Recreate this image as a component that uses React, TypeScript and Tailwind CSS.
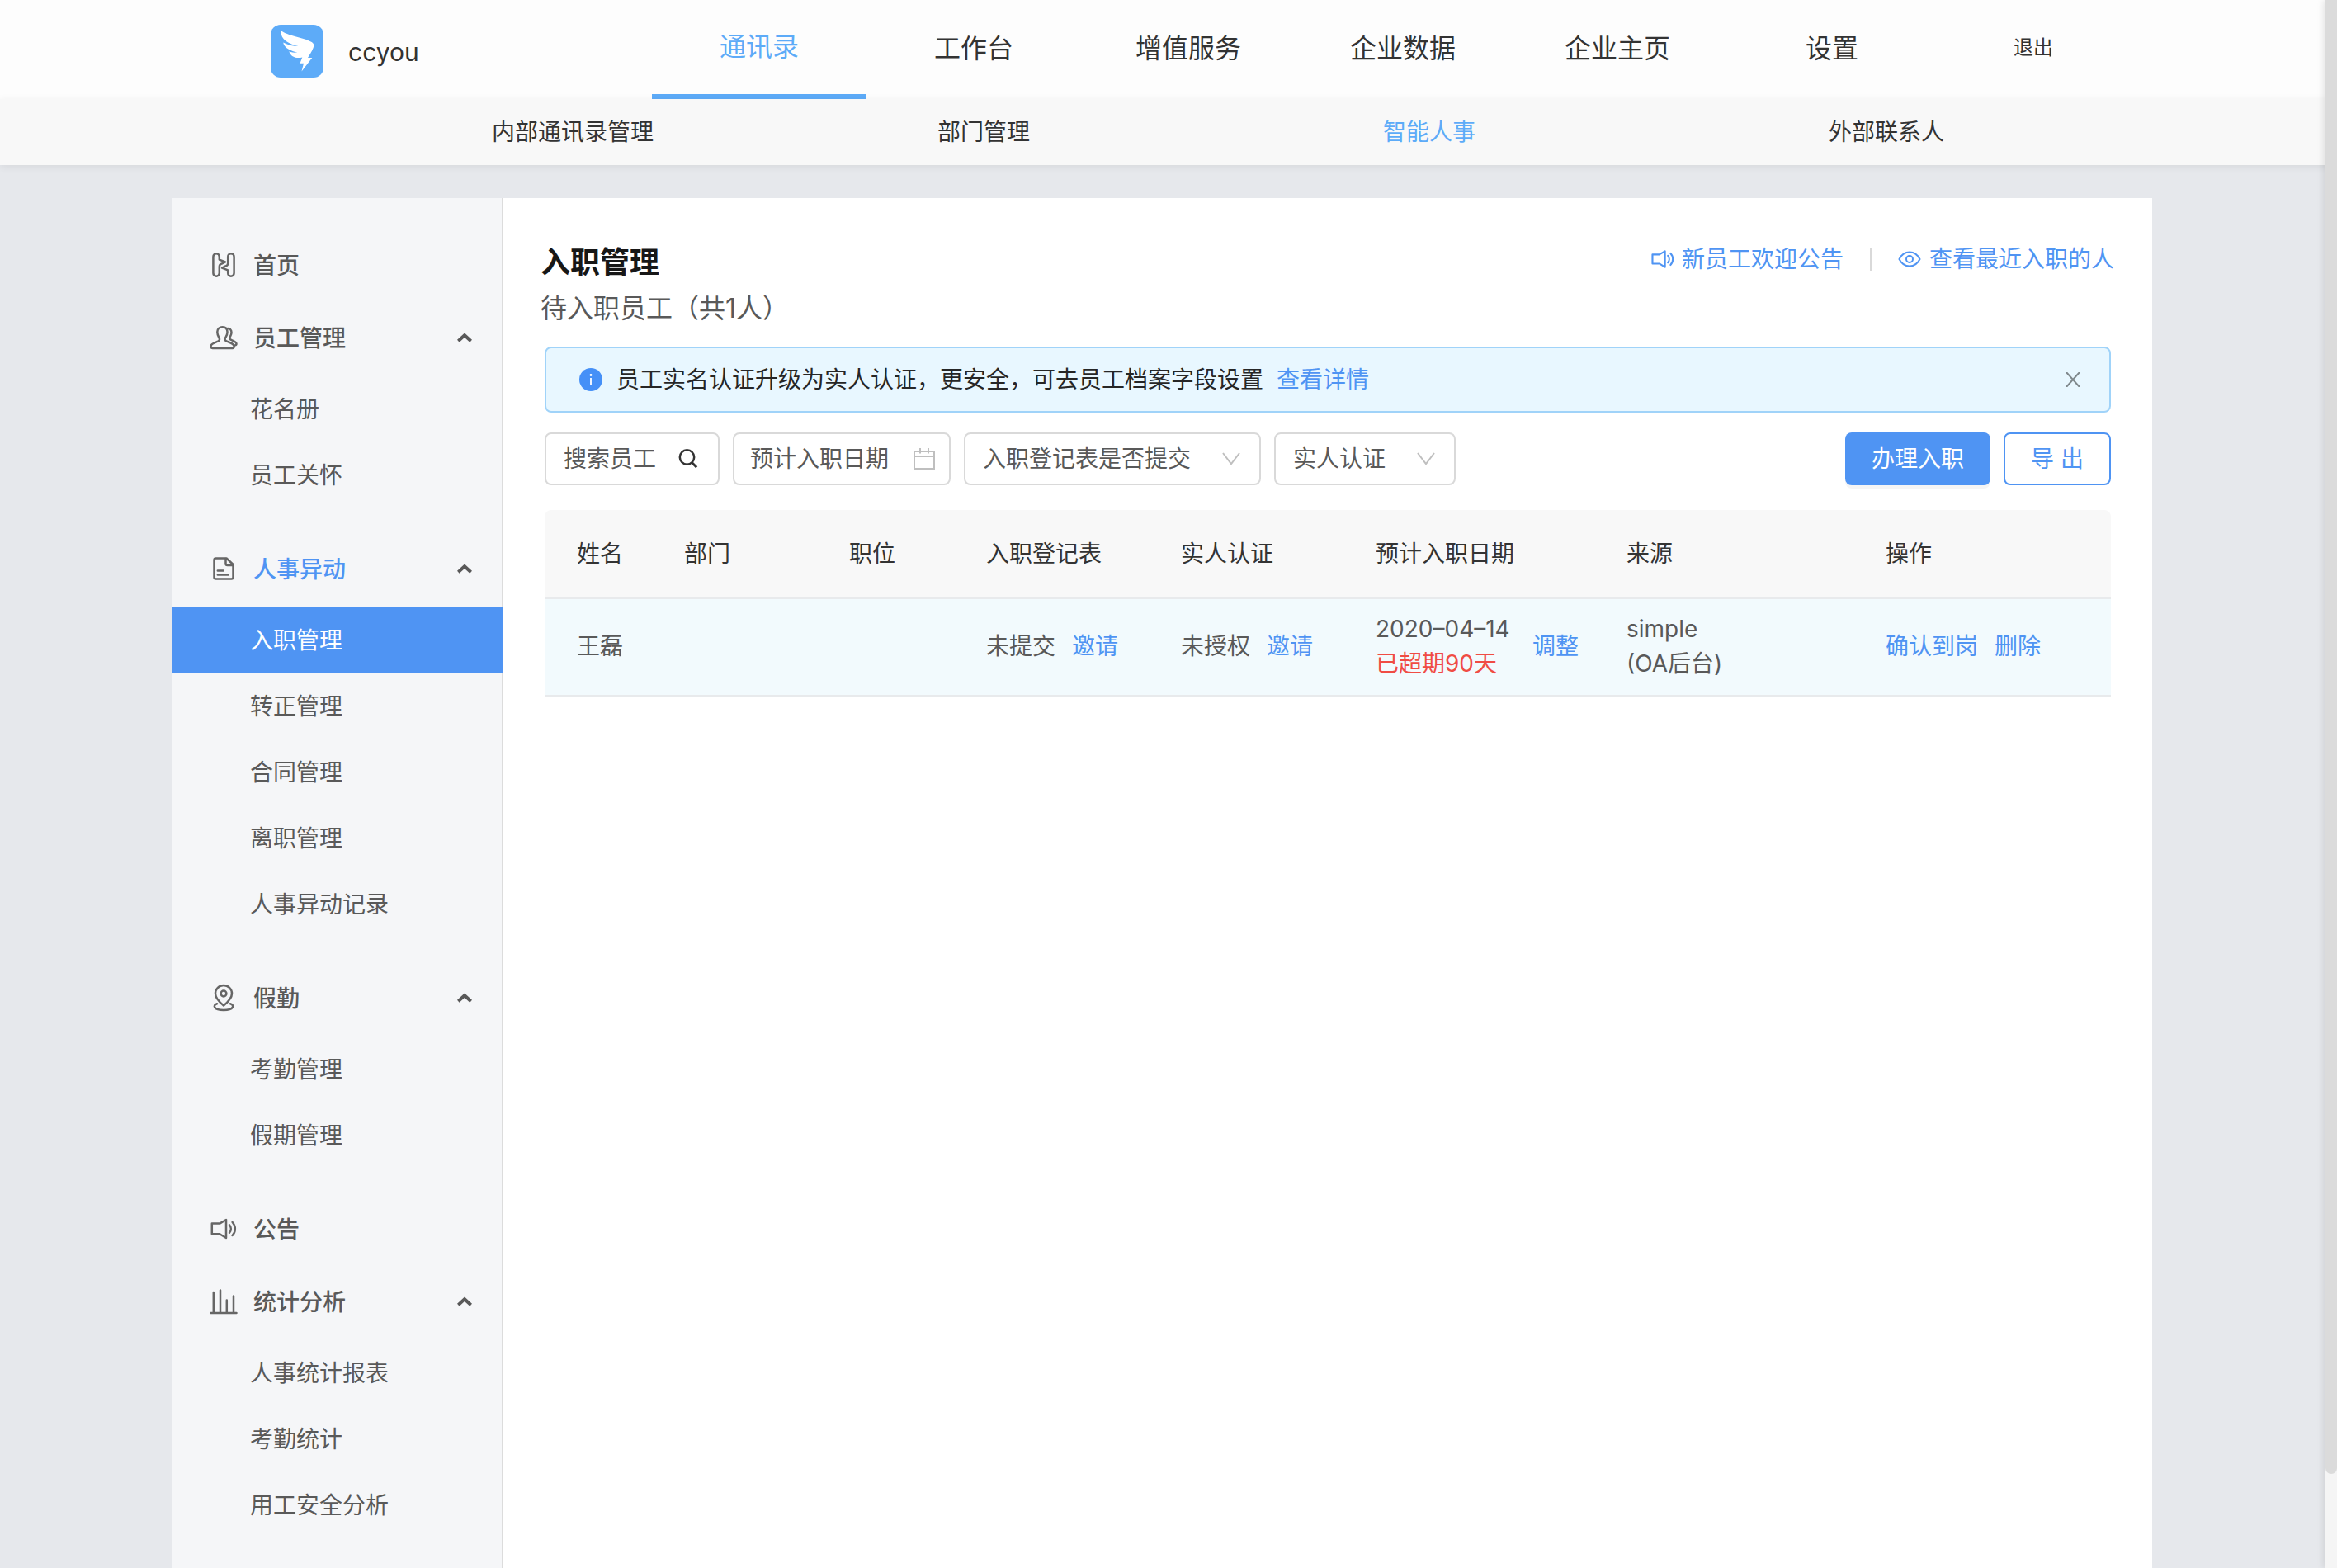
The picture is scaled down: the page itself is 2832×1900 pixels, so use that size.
import type { ReactNode } from 'react';

const topTabs = ['通讯录', '工作台', '增值服务', '企业数据', '企业主页', '设置'];
const subTabs = ['内部通讯录管理', '部门管理', '智能人事', '外部联系人'];

type MenuSection = {
  title: string;
  icon: ReactNode;
  items?: string[];
};

function MenuIcon({ children }: { children: ReactNode }) {
  return (
    <svg
      viewBox="0 0 34 34"
      className="w-[34px] h-[34px] mb-0.5 shrink-0 text-[#666666]"
      fill="none"
      stroke="currentColor"
      strokeWidth="2.5"
      strokeLinecap="round"
      strokeLinejoin="round"
      aria-hidden="true"
    >
      {children}
    </svg>
  );
}

const soundShape = (
  <>
    <path d="M2.8 10.6h9.4L20 6v22l-7.8-4.8H2.8z" />
    <path d="M24 12.2c2.4 2.8 2.4 6.8 0 9.6M27.6 9c4.3 4.4 4.3 11.6 0 16" />
  </>
);

const sections: MenuSection[] = [
  {
    title: '首页',
    icon: (
      <MenuIcon>
        <path d="M4.4 7a3.7 3.7 0 0 1 7.4 0v3.6l7.2 2.8-4.4 2.2c-1.9.4-2.8 1.4-2.8 3.4v8a3.7 3.7 0 0 1-7.4 0z" />
        <path d="M29.6 27a3.7 3.7 0 0 1-7.4 0v-3.6L15 20.6l4.4-2.2c1.9-.4 2.8-1.4 2.8-3.4V7a3.7 3.7 0 0 1 7.4 0z" />
      </MenuIcon>
    ),
  },
  {
    title: '员工管理',
    icon: (
      <MenuIcon>
        <path d="M15.5 4.3c4 0 6 2.5 6 6 0 4-1.5 5.5-2.5 7.2-1 2 0 3.4 2 4.2 3 1.2 7.5 2.5 8.5 5.1.5 1.5 0 3.2-1.5 3.2H3.5c-2 0-2.3-2.5-1.5-3.8 1.2-2 5-3.2 8-4.5 2-1 2.5-2.5 1.5-4.2-1-1.7-2.2-3.5-2.2-7.2 0-3.500 2.500-6 6.200-6z" />
        <path d="M21 6.2c3.5-.5 5.500 1.500 5.500 4.500s-1 4-1.800 5.500c-1 2 0 3.200 2 4 3 1.200 5.800 2.200 5.800 4.500 0 1.500-1 1.800-3 1.800" />
      </MenuIcon>
    ),
    items: ['花名册', '员工关怀'],
  },
  {
    title: '人事异动',
    icon: (
      <MenuIcon>
        <path d="M7.5 4.5h13l8 7.5v15.5a2 2 0 0 1-2 2h-19a2 2 0 0 1-2-2v-21a2 2 0 0 1 2-2z" />
        <path d="M19.5 5v6a2 2 0 0 0 2 2H28M9.800 19.600h7M9.800 24.400h13" />
      </MenuIcon>
    ),
    items: ['入职管理', '转正管理', '合同管理', '离职管理', '人事异动记录'],
  },
  {
    title: '假勤',
    icon: (
      <MenuIcon>
        <path d="M17 26.5c-5.500-4.500-10-9-10-14.500a10 10 0 0 1 20 0c0 5.500-4.500 10-10 14.500z" />
        <circle cx="17" cy="12" r="3.4" />
        <path d="M9 24.200c-5.500 1.800-4.500 7.800 8 7.800s13.500-6 8-7.800" />
      </MenuIcon>
    ),
    items: ['考勤管理', '假期管理'],
  },
  { title: '公告', icon: <MenuIcon>{soundShape}</MenuIcon> },
  {
    title: '统计分析',
    icon: (
      <MenuIcon>
        <path d="M1.5 31h31M4.800 30V6M13 30V3.500M20.800 30V15.500M29 30V10.500" />
      </MenuIcon>
    ),
    items: ['人事统计报表', '考勤统计', '用工安全分析'],
  },
];

function Logo() {
  return (
    <svg viewBox="0 0 64 64" className="w-16 h-16" aria-hidden="true">
      <rect width="64" height="64" rx="12" fill="#5dabf8" />
      <path
        fill="#ffffff"
        d="M12.7 7c7 6.500 27 8 37 14 3 1.900 3 4.200 1.900 7-1.600 4.300-4.400 8.700-6.600 11.900h5.300L37.500 56.500 40 46.800h-4.500l2.800-7.300c-7 1.800-13.800-.3-16-7.300 3.200 1.200 6.900 1.700 10.200 1.500-7.500-1.900-16.300-5.200-17.300-12.200 5.800 3.200 12.300 4.500 18.300 4.500C24 23.600 11 18.600 12.700 7z"
      />
    </svg>
  );
}

function DownIcon() {
  return (
    <svg
      viewBox="0 0 22 16"
      className="pointer-events-none absolute right-[25px] top-6 w-[22px] h-4"
      fill="none"
      stroke="#bfbfbf"
      strokeWidth="2"
      aria-hidden="true"
    >
      <path d="M1 1l10 13L21 1" />
    </svg>
  );
}

function Sidebar() {
  return (
    <aside className="w-[402px] shrink-0 bg-[#f5f6f8] border-r-2 border-[#dcdcdc] pt-[38px] text-[#595959]">
      {sections.map((section) => (
        <div key={section.title}>
          <button
            type="button"
            className="flex items-center w-full h-[88px] pl-[46px] pr-9 gap-[19px] text-left font-medium"
          >
            {section.icon}
            <span className={section.title === '人事异动' ? 'flex-1 text-[#4f94f3]' : 'flex-1'}>
              {section.title}
            </span>
            {section.items && (
              <svg
                viewBox="0 0 18 12"
                className="w-[18px] h-3 mb-0.5"
                fill="none"
                stroke="currentColor"
                strokeWidth="4"
                aria-hidden="true"
              >
                <path d="M1.300 10.200L9 3.200l7.700 7" />
              </svg>
            )}
          </button>
          {section.items && (
            <ul className="pt-0.5 pb-[30px]">
              {section.items.map((item) => (
                <li key={item}>
                  <a
                    href="#"
                    className={
                      item === '入职管理'
                        ? 'flex items-center h-20 pl-[95px] -mr-0.5 bg-[#4f94f3] text-white'
                        : 'flex items-center h-20 pl-[95px]'
                    }
                  >
                    {item}
                  </a>
                </li>
              ))}
            </ul>
          )}
        </div>
      ))}
    </aside>
  );
}

function Filters() {
  return (
    <form className="flex gap-4 mt-6 text-[#595959]">
      <label className="relative w-[212px]">
        <input
          type="text"
          aria-label="搜索员工"
          placeholder="搜索员工"
          className="w-full h-16 pl-[21px] pr-14 rounded-lg border-2 border-[#d9d9d9] placeholder:text-[#595959]"
        />
        <svg
          viewBox="0 0 24 24"
          className="absolute right-[26px] top-5 w-6 h-6"
          fill="none"
          stroke="#333333"
          strokeWidth="2.5"
          aria-hidden="true"
        >
          <circle cx="10.5" cy="10" r="8.7" />
          <path d="M16.200 16.200l6 6" strokeWidth="3" />
        </svg>
      </label>
      <label className="relative w-[264px]">
        <input
          type="text"
          aria-label="预计入职日期"
          placeholder="预计入职日期"
          className="w-full h-16 pl-[19px] pr-14 rounded-lg border-2 border-[#d9d9d9] placeholder:text-[#595959]"
        />
        <svg
          viewBox="0 0 26 26"
          className="absolute right-[19px] top-[19px] w-[26px] h-[26px]"
          fill="none"
          stroke="#bfbfbf"
          strokeWidth="2"
          aria-hidden="true"
        >
          <path d="M1 4h24v21H1zM1 10h24M8 0v6.500M18 0v6.500" />
        </svg>
      </label>
      <label className="relative w-[360px]">
        <select
          aria-label="入职登记表是否提交"
          className="appearance-none w-full h-16 pl-[21px] pr-14 rounded-lg border-2 border-[#d9d9d9]"
        >
          <option>入职登记表是否提交</option>
        </select>
        <DownIcon />
      </label>
      <label className="relative w-[220px]">
        <select
          aria-label="实人认证"
          className="appearance-none w-full h-16 pl-[21px] pr-14 rounded-lg border-2 border-[#d9d9d9]"
        >
          <option>实人认证</option>
        </select>
        <DownIcon />
      </label>
      <button
        type="button"
        className="ml-auto w-[176px] h-16 rounded-lg bg-[#4f94f3] text-white shadow-[0_4px_0_rgba(0,0,0,0.04)]"
      >
        办理入职
      </button>
      <button type="button" className="w-[130px] h-16 rounded-lg border-2 border-[#4f94f3] text-[#4f94f3]">
        导 出
      </button>
    </form>
  );
}

function EmployeeTable() {
  return (
    <table className="w-full mt-[30px] table-fixed border-separate border-spacing-0 leading-[42px] text-left">
      <colgroup>
        <col className="w-[130px]" />
        <col className="w-[200px]" />
        <col className="w-[166px]" />
        <col className="w-[236px]" />
        <col className="w-[236px]" />
        <col className="w-[304px]" />
        <col className="w-[314px]" />
        <col />
      </colgroup>
      <thead>
        <tr className="text-[#333333]">
          {['姓名', '部门', '职位', '入职登记表', '实人认证', '预计入职日期', '来源', '操作'].map((name) => (
            <th
              key={name}
              className="h-[108px] pl-[39px] font-normal bg-[#f8f8f8] border-b-2 border-[#e8eaec] first:rounded-tl-lg last:rounded-tr-lg"
            >
              {name}
            </th>
          ))}
        </tr>
      </thead>
      <tbody>
        <tr className="bg-[#f2fafd] text-[#595959] *:h-[118px] *:pl-[39px] *:pb-0.5 *:border-b-2 *:border-[#e8eaec]">
          <td>王磊</td>
          <td></td>
          <td></td>
          <td>
            <span className="flex gap-5">
              未提交
              <a href="#" className="text-[#4f94f3]">邀请</a>
            </span>
          </td>
          <td>
            <span className="flex gap-5">
              未授权
              <a href="#" className="text-[#4f94f3]">邀请</a>
            </span>
          </td>
          <td>
            <div className="flex items-center">
              <div className="w-[190px]">
                <div>2020–04–14</div>
                <div className="text-[#f04c44]">已超期90天</div>
              </div>
              <a href="#" className="text-[#4f94f3]">调整</a>
            </div>
          </td>
          <td>
            <div>simple</div>
            <div>(OA后台)</div>
          </td>
          <td>
            <span className="flex gap-5 text-[#4f94f3]">
              <a href="#">确认到岗</a>
              <a href="#">删除</a>
            </span>
          </td>
        </tr>
      </tbody>
    </table>
  );
}

export default function App() {
  return (
    <div className="relative flex flex-col min-h-screen pr-4 bg-[#e6e8ec] text-[28px] leading-[40px] text-[#333333] font-['Inter','Noto_Sans_CJK_SC',sans-serif]">
      <header className="-mr-4 pr-4 bg-[#fdfdfd]">
        <div className="flex w-full max-w-[2160px] h-[120px] mx-auto">
          <div className="flex items-center w-[462px] pt-1 gap-[30px]">
            <Logo />
            <span className="pt-0.5 text-[30px]">ccyou</span>
          </div>
          <nav className="flex text-[32px]">
            {topTabs.map((tab) => (
              <a
                key={tab}
                href="#"
                className={
                  tab === '通讯录'
                    ? 'flex items-center justify-center w-[260px] border-b-[6px] border-[#5dabf8] text-[#5dabf8]'
                    : 'flex items-center justify-center w-[260px] pb-0.5'
                }
              >
                {tab}
              </a>
            ))}
          </nav>
          <a href="#" className="flex items-center ml-auto pb-1 text-2xl">退出</a>
        </div>
      </header>
      <div className="-mr-4 pr-4 bg-[#f8f8f8] shadow-[0_2px_10px_rgba(0,0,0,0.07)]">
        <nav className="grid grid-cols-4 w-full max-w-[2160px] h-20 mx-auto">
          {subTabs.map((tab) => (
            <a
              key={tab}
              href="#"
              className={
                tab === '智能人事'
                  ? 'flex items-center pl-[268px] whitespace-nowrap text-[#5dabf8]'
                  : 'flex items-center pl-[268px] whitespace-nowrap'
              }
            >
              {tab}
            </a>
          ))}
        </nav>
      </div>

      <div className="flex flex-1 w-full max-w-[2400px] mx-auto mt-10 bg-white">
        <Sidebar />
        <main className="flex-1 pt-[50px]">
          <div className="flex justify-between pl-[45px] pr-[46px]">
            <div>
              <h1 className="text-4xl leading-[56px] font-bold text-[#171717]">入职管理</h1>
              <p className="text-[32px] leading-[56px] text-[#595959]">待入职员工（共1人）</p>
            </div>
            <div className="flex items-center h-12 text-[#4f94f3]">
              <a href="#" className="flex items-center gap-2">
                <svg
                  viewBox="0 0 34 34"
                  className="w-[30px] h-[30px]"
                  fill="none"
                  stroke="currentColor"
                  strokeWidth="2.4"
                  strokeLinecap="round"
                  strokeLinejoin="round"
                  aria-hidden="true"
                >
                  {soundShape}
                </svg>
                新员工欢迎公告
              </a>
              <span className="w-0.5 h-7 mx-8 bg-[#d9d9d9]" />
              <a href="#" className="flex items-center gap-[10px]">
                <svg
                  viewBox="0 0 28 28"
                  className="w-7 h-7"
                  fill="none"
                  stroke="currentColor"
                  strokeWidth="2"
                  aria-hidden="true"
                >
                  <path d="M1.500 14C4.500 8 9 5.500 14 5.500S23.500 8 26.500 14c-3 6-7.500 8.500-12.500 8.500S4.500 20 1.500 14z" />
                  <circle cx="14" cy="14" r="4" />
                </svg>
                查看最近入职的人
              </a>
            </div>
          </div>

          <div className="px-[50px] pt-[18px]">
            <div className="flex items-center h-20 pl-10 pr-[35px] rounded-lg border-2 border-[#a0d3f9] bg-[#e8f7ff] text-[#262626]">
              <svg viewBox="0 0 28 28" className="w-7 h-7 mr-[17px]" aria-hidden="true">
                <circle cx="14" cy="14" r="14" fill="#4590f7" />
                <circle cx="14" cy="8.5" r="1.4" fill="#ffffff" />
                <path d="M14 12v9" stroke="#ffffff" strokeWidth="1.8" />
              </svg>
              <span>员工实名认证升级为实人认证，更安全，可去员工档案字段设置</span>
              <a href="#" className="ml-4 text-[#4f94f3]">查看详情</a>
              <button type="button" aria-label="关闭" className="ml-auto">
                <svg
                  viewBox="0 0 18 18"
                  className="w-[18px] h-[18px]"
                  stroke="#7f888c"
                  strokeWidth="2"
                  aria-hidden="true"
                >
                  <path d="M1 0l16 18M17 0L1 18" />
                </svg>
              </button>
            </div>
            <Filters />
            <EmployeeTable />
          </div>
        </main>
      </div>

      {/* page scrollbar */}
      <div
        aria-hidden="true"
        className="absolute inset-y-0 right-0 w-[14px] bg-[#f5f5f5] shadow-[-2px_0_8px_rgba(0,0,0,0.12)]"
      >
        <div className="h-[94%] rounded-b-full bg-[#dbdbdb]" />
      </div>
    </div>
  );
}
